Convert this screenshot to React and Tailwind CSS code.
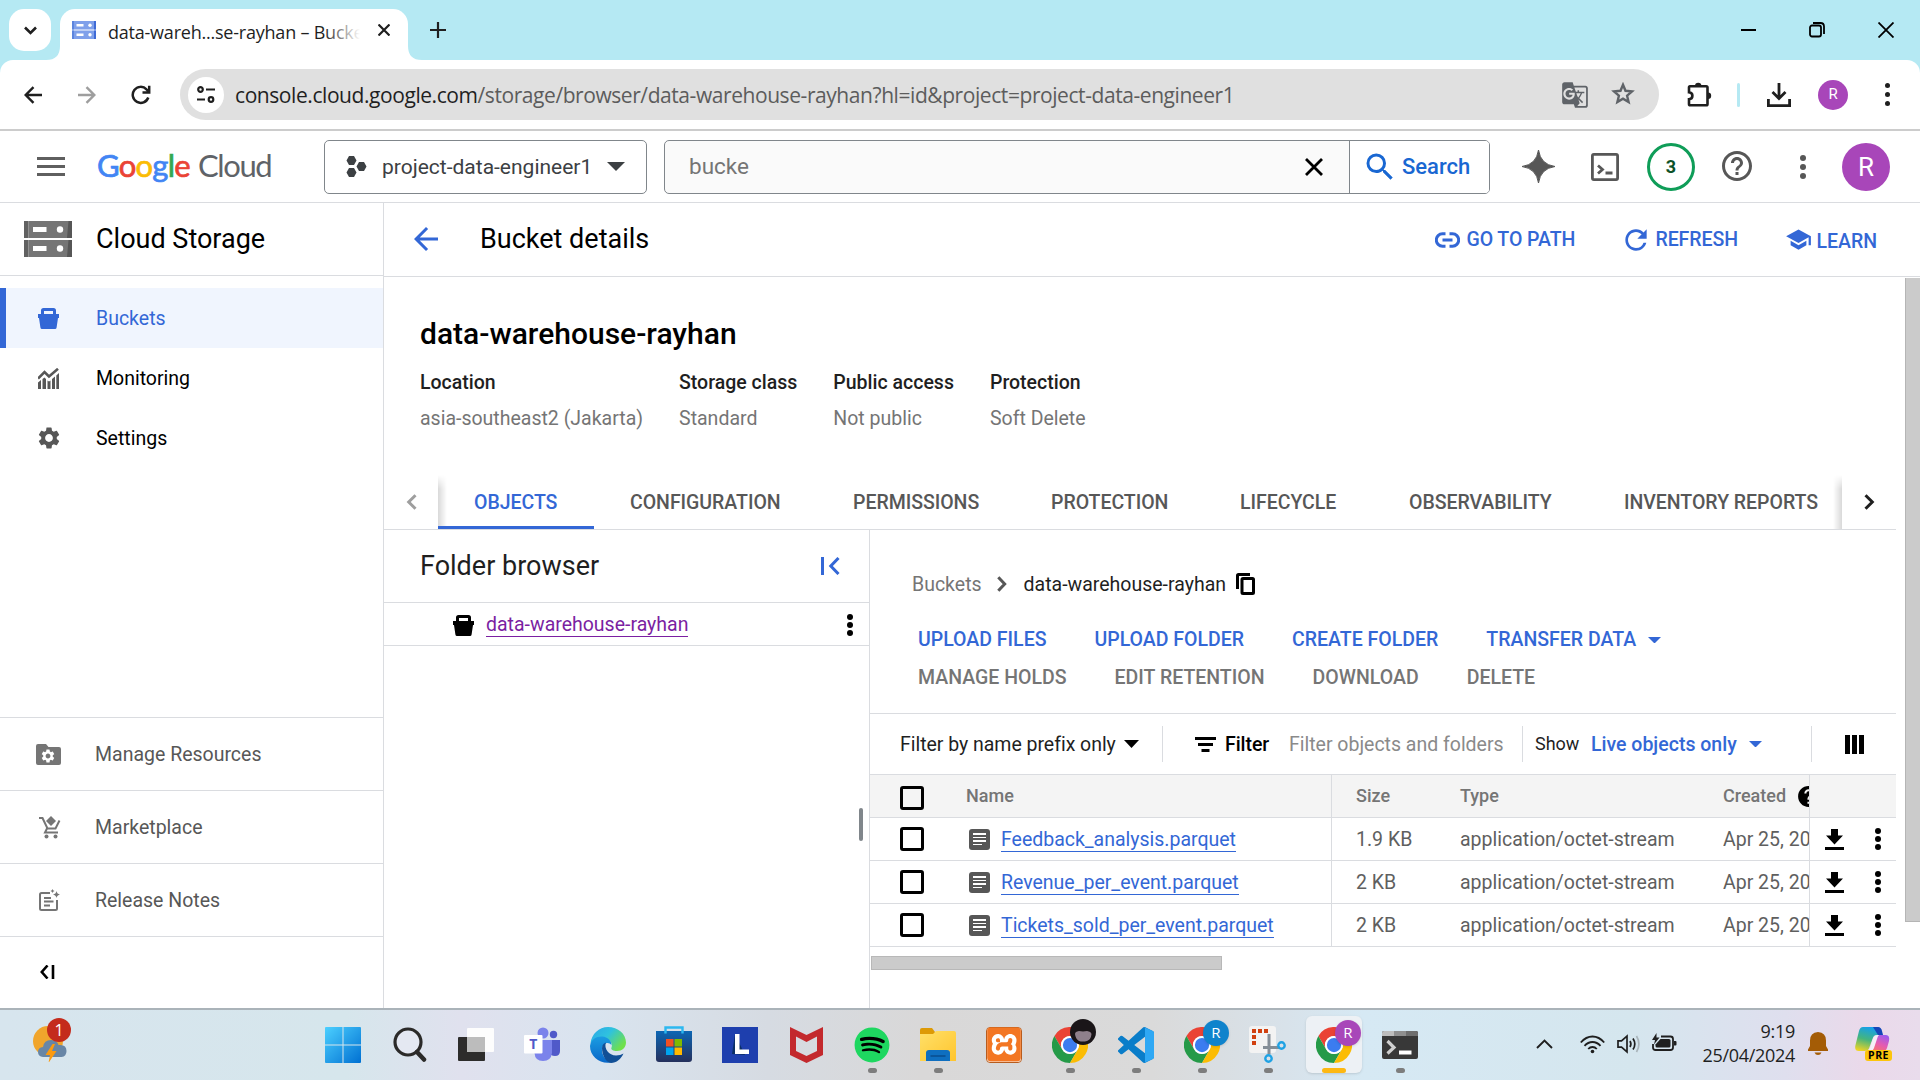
import React from "react";
import {
  MdArrowBack, MdRefresh, MdGTranslate, MdSearch, MdHelpOutline, MdSchool, MdSettings, MdHelp,
} from "react-icons/md";
import { FaSpotify } from "react-icons/fa";
import { SiXampp } from "react-icons/si";

const Dots = ({ className = "gap-[3px] text-black", dot = "h-[6px] w-[6px]" }) => (
  <span className={"flex shrink-0 flex-col items-center " + className}>
    <span className={"rounded-full bg-current " + dot} />
    <span className={"rounded-full bg-current " + dot} />
    <span className={"rounded-full bg-current " + dot} />
  </span>
);

const Caret = ({ w, h, className = "" }) => (
  <svg width={w} height={h} viewBox="0 0 10 5" preserveAspectRatio="none" className={"shrink-0 " + className}>
    <path d="M0 0h10L5 5z" fill="currentColor" />
  </svg>
);

const BucketIcon = ({ className }) => (
  <svg width="21" height="21" viewBox="0 0 21 21" fill="currentColor" className={"shrink-0 " + className}>
    <path fillRule="evenodd" d="M5.5 0h10Q18 0 18 2.5V6h3v4h-1l-1.4 9.4Q18.400 21 17 21H4Q2.600 21 2.400 19.400L1 10H0V6h3V2.500Q3 0 5.500 0zM6 3v3h9V3z" />
  </svg>
);

const StorageLogo = () => (
  <svg width="48" height="36" viewBox="0 0 48 36" className="shrink-0">
    {[0, 19].map((y) => (
      <g key={y} transform={`translate(0 ${y})`}>
        <rect width="48" height="17" fill="#757575" />
        <rect width="4" height="17" fill="#616161" />
        <path d="M4 0h.8v17H4z" fill="#9a9a9a" />
        <path d="M44.500 0H48v17h-5z" fill="#565656" />
        <rect x="9" y="6" width="13.500" height="5" fill="#fff" />
        <circle cx="36" cy="8.500" r="3.200" fill="#fff" />
      </g>
    ))}
  </svg>
);

const DownloadSmall = () => (
  <svg width="19" height="21" viewBox="0 0 19 21" className="shrink-0">
    <path d="M6 0h7v6.500h5L9.500 15.500 1 6.500h5zM0 18h19v3H0z" fill="#000" />
  </svg>
);

const Checkbox = () => <span className="h-6 w-6 shrink-0 rounded-[3px] border-[3px] border-black" />;

function TabStrip() {
  return (
    <div className="flex h-[60px] items-start bg-[#b5e9f3]">
      <div className="ml-[9px] mt-[9px] flex h-[42px] w-[42px] items-center justify-center rounded-[15px] bg-white">
        <svg width="13" height="9" viewBox="0 0 13 9" fill="none" stroke="#1f1f1f" strokeWidth="2.600"><path d="M1 1.500 6.500 7 12 1.500" /></svg>
      </div>
      <div className="relative ml-[9px] mt-[9px] flex h-[51px] w-[348px] items-center rounded-t-[15px] bg-white">
        <svg className="absolute bottom-0 -left-[14px]" width="14" height="14"><path d="M14 0v14H0Q14 14 14 0z" fill="#fff" /></svg>
        <svg className="absolute bottom-0 -right-[14px]" width="14" height="14"><path d="M0 0v14h14Q0 14 0 0z" fill="#fff" /></svg>
        <svg width="24" height="18" viewBox="0 0 24 18" className="mb-[9px] ml-3 shrink-0">
          {[0, 9.500].map((y) => (
            <g key={y} transform={`translate(0 ${y})`}>
              <rect width="24" height="8.500" fill="#7fa0ea" /><rect width="2" height="8.500" fill="#5c85de" /><rect x="22" width="2" height="8.500" fill="#3f6bd6" />
              <rect x="4.500" y="3" width="7" height="2.500" fill="#fff" /><circle cx="18" cy="4.200" r="1.700" fill="#fff" />
            </g>
          ))}
        </svg>
        <span className="relative mb-[6px] ml-3 w-[252px] overflow-hidden whitespace-nowrap font-['Open_Sans'] text-[18px] leading-6 tracking-[-0.22px] text-[#1f1f1f]">
          data-wareh...se-rayhan – Bucke
          <span className="absolute inset-y-0 right-0 w-9 bg-gradient-to-r from-transparent to-white" />
        </span>
        <svg width="12" height="12" viewBox="0 0 12 12" className="mb-[9px] ml-[18px] shrink-0" stroke="#1f1f1f" strokeWidth="2.200"><path d="M.5.5l11 11M11.500.5l-11 11" /></svg>
      </div>
      <svg width="16" height="16" viewBox="0 0 16 16" className="ml-[22px] mt-[22px]" stroke="#1f1f1f" strokeWidth="2.200"><path d="M8 0v16M0 8h16" /></svg>
      <div className="ml-auto mr-[26px] mt-[22px] flex items-center text-black">
        <svg width="15" height="15" stroke="currentColor" strokeWidth="2"><path d="M0 7h15" /></svg>
        <svg width="16" height="16" viewBox="0 0 16 16" className="ml-[53px]" fill="none" stroke="currentColor" strokeWidth="1.800">
          <rect x="1" y="3.500" width="11" height="11" rx="2" /><path d="M4 1h7.500Q15 1 15 4.500V12" />
        </svg>
        <svg width="16" height="16" viewBox="0 0 16 16" className="ml-[53px]" stroke="currentColor" strokeWidth="1.800"><path d="M.5.5l15 15M15.500.5l-15 15" /></svg>
      </div>
    </div>
  );
}

function Toolbar() {
  return (
    <div className="bg-[#b5e9f3]">
      <div className="flex h-[71px] items-center rounded-t-[13px] border-b-2 border-[#cccccc] bg-white text-[#1f1f1f]">
        <svg width="18" height="18" viewBox="0 0 18 18" className="ml-6 shrink-0" fill="none" stroke="currentColor" strokeWidth="2.400"><path d="M18 9H2M9.500 1.200 1.700 9l7.800 7.800" /></svg>
        <svg width="18" height="18" viewBox="0 0 18 18" className="ml-9 shrink-0" fill="none" stroke="#9e9e9e" strokeWidth="2.400"><path d="M0 9h16M8.500 1.200 16.300 9l-7.800 7.800" /></svg>
        <svg width="20" height="20" viewBox="0 0 20 20" className="ml-[35px] shrink-0" fill="none" stroke="currentColor" strokeWidth="2.500"><path d="M17.300 12.500A8 8 0 1 1 15.500 4.300L17.800 6.500M18.200.8v6.700h-6.700" /></svg>
        <div className="ml-[29px] flex h-[51px] w-[1479px] items-center rounded-full bg-[#e0e0e0]">
          <span className="ml-2 flex h-9 w-9 items-center justify-center rounded-full bg-white">
            <svg width="18" height="17" viewBox="0 0 18 17" fill="none" stroke="#1f1f1f" strokeWidth="2.200">
              <circle cx="3.500" cy="3.500" r="2.300" /><path d="M9 3.500h9M0 13.500h8" /><circle cx="14" cy="13.500" r="2.300" />
            </svg>
          </span>
          <span className="ml-[11px] whitespace-nowrap font-['Open_Sans'] text-[21px] leading-7 tracking-[-0.43px] text-[#5c5c5c]">
            <span className="text-[#1f1f1f]">console.cloud.google.com</span>/storage/browser/data-warehouse-rayhan?hl=id&amp;project=project-data-engineer1
          </span>
          <MdGTranslate size={28} className="ml-auto mr-[22px] shrink-0 text-[#5f6368]" />
          <svg width="24" height="23" viewBox="0 0 24 23" className="mb-[2px] mr-[24px] shrink-0" fill="none" stroke="#5f6368" strokeWidth="2.400">
            <path d="M12 2.800l2.500 6 6.500.6-4.900 4.300 1.500 6.400L12 16.700l-5.600 3.400 1.500-6.400L3 9.400l6.500-.6z" />
          </svg>
        </div>
        <svg width="25" height="25" viewBox="0 0 25 25" className="ml-[28px] shrink-0">
          <path d="M3 4.300h16.200q1.300 0 1.300 1.300V22q0 1.300-1.300 1.300H3.300Q2 23.300 2 22v-4.700q3.400-.3 3.400-3.500T2 10.300V5.600Q2 4.300 3 4.300z" fill="none" stroke="currentColor" strokeWidth="2.600" />
          <path d="M8 4a3.200 3.200 0 0 1 6.400 0zM21 10.500a3.200 3.200 0 0 1 0 6.400z" fill="currentColor" />
        </svg>
        <span className="ml-[25px] h-6 w-[3px] rounded bg-[#b5e9f3]" />
        <svg width="24" height="24" viewBox="0 0 24 24" className="ml-[27px] shrink-0" fill="none" stroke="currentColor" strokeWidth="2.800">
          <path d="M12 0v15M5.500 9 12 15.500 18.500 9M1.400 16v6.600h21.200V16" />
        </svg>
        <span className="ml-[27px] flex h-[30px] w-[30px] items-center justify-center rounded-full bg-[#a846b9] text-[15px] leading-none text-white">R</span>
        <Dots className="ml-[37px] gap-1" dot="h-[5px] w-[5px]" />
      </div>
    </div>
  );
}

function CloudHeader() {
  return (
    <div className="flex h-[72px] items-center border-b border-[#dadce0] bg-white text-[#575757]">
      <div className="ml-[37px] flex w-7 shrink-0 flex-col gap-[5px] pb-px">
        <span className="h-[3px] bg-[#5f5f5f]" /><span className="h-[3px] bg-[#5f5f5f]" /><span className="h-[3px] bg-[#5f5f5f]" />
      </div>
      <div className="mb-[3px] ml-[32px] flex w-[175px] shrink-0 items-center whitespace-nowrap font-['Lato'] text-[31px] leading-9">
        <span className="w-[101px] tracking-[-0.75px] [-webkit-text-stroke:0.7px]">
          <span className="text-[#4285f4]">G</span><span className="text-[#ea4335]">o</span><span className="text-[#fbbc04]">o</span><span className="text-[#4285f4]">g</span><span className="text-[#34a853]">l</span><span className="text-[#ea4335]">e</span>
        </span>
        <span className="tracking-[-1.4px] text-[#5f6368]">Cloud</span>
      </div>
      <div className="ml-[52px] flex h-[54px] w-[323px] shrink-0 items-center rounded-[5px] border border-[#80868b] text-[#3c4043]">
        <svg width="21" height="21" viewBox="0 0 21 21" className="ml-[21px] shrink-0" fill="#3c4043">
          <path d="M3 0h5l2.500 4.500L8 9H3L.5 4.500zM3 12h5l2.500 4.500L8 21H3L.5 16.500zM13 6h5l2.500 4.500L18 15h-5l-2.500-4.500z" />
        </svg>
        <span className="ml-[15px] w-[209px] whitespace-nowrap text-[21px] leading-7">project-data-engineer1</span>
        <Caret w={18} h={9} className="ml-4" />
      </div>
      <div className="ml-[17px] flex h-[54px] w-[826px] shrink-0 items-center overflow-hidden rounded-[5px] border border-[#80868b] bg-[#fafafa]">
        <span className="mb-[2px] ml-6 flex-1 text-[22.5px] leading-7 text-[#757575]">bucke</span>
        <svg width="18" height="18" viewBox="0 0 18 18" stroke="#000" strokeWidth="2.800"><path d="M1 1l16 16M17 1 1 17" /></svg>
        <div className="ml-[26px] flex h-full w-[140px] items-center border-l border-[#80868b] bg-white text-[#1967d2]">
          <MdSearch size={36} className="ml-3 shrink-0" />
          <span className="ml-1 text-[22px] font-medium leading-7">Search</span>
        </div>
      </div>
      <svg width="33" height="33" viewBox="0 0 33 33" className="ml-[32px] shrink-0"><path d="M16.500 0Q18.500 14.500 33 16.500 18.500 18.500 16.500 33 14.500 18.500 0 16.500 14.500 14.500 16.500 0z" fill="#575757" stroke="#575757" strokeWidth="1" /></svg>
      <svg width="28" height="28" viewBox="0 0 28 28" className="ml-[36px] shrink-0" fill="none" stroke="#575757" strokeWidth="2.800">
        <rect x="1.400" y="1.400" width="25.200" height="25.200" rx="1.500" /><path d="M7 12.500l4.500 4L7 20.500M14.500 20h7" />
      </svg>
      <span className="ml-[28px] flex h-12 w-12 shrink-0 items-center justify-center rounded-full border-[3px] border-[#0f9d58] text-[18px] font-bold leading-none text-[#0d5229]">3</span>
      <MdHelpOutline size={36} className="mb-px ml-6 shrink-0" />
      <Dots className="ml-[45px] gap-[3px]" dot="h-[6px] w-[6px]" />
      <span className="ml-[36px] flex h-12 w-12 shrink-0 items-center justify-center rounded-full bg-[#a846b9] text-[26px] leading-none text-white">R</span>
    </div>
  );
}

const MonitoringIcon = () => (
  <svg width="21" height="21" viewBox="0 0 21 21" className="shrink-0">
    <path d="M0 10.500 6.500 4l4.500 4.500L20 .8" fill="none" stroke="#575757" strokeWidth="2.600" />
    <path d="M0 14.500 3 12v9H0zM4.500 11l2-1.500 1.500 1.500v10H4.500zM9.500 12.500l1.500 1 1.500-1V21h-3zM14 11l3-2.500V21h-3zM18.300 7.500 21 5v16h-2.700z" fill="#575757" />
  </svg>
);

const FolderGear = () => (
  <span className="relative flex h-[21px] w-[25px] items-center justify-center">
    <svg width="25" height="21" viewBox="0 0 25 21"><path d="M2 0h8l2.500 3H23q2 0 2 2v14q0 2-2 2H2q-2 0-2-2V2q0-2 2-2z" fill="#757575" /></svg>
    <MdSettings size={16} className="absolute left-[4px] top-[4px] text-white" />
  </span>
);

const MarketIcon = () => (
  <svg width="22" height="23" viewBox="0 0 22 23" className="ml-0.5">
    <path d="M0 2h3.500l5 10.500h8L20.500 4.500M8 12.500 6 16.500h13" fill="none" stroke="#757575" strokeWidth="2" />
    <path d="M12 0l5 5-5 5-5-5z" fill="#757575" /><circle cx="7.500" cy="20.500" r="2" fill="#757575" /><circle cx="16.500" cy="20.500" r="2" fill="#757575" />
  </svg>
);

const NotesIcon = () => (
  <svg width="21" height="22" viewBox="0 0 21 22" className="ml-0.5">
    <path d="M11 4H2.500Q1 4 1 5.500v14Q1 21 2.500 21h14q1.500 0 1.500-1.500V11" fill="none" stroke="#757575" strokeWidth="2" />
    <path d="M5 9h7M5 12.500h9.500M5 16.500h6" stroke="#757575" strokeWidth="1.800" />
    <path d="M17.500 2q.5 3 3.500 3.500-3 .5-3.500 3.500-.5-3-3.500-3.500 3-.5 3.500-3.500zM13.500 0q.3 1.700 2 2-1.700.3-2 2-.3-1.700-2-2 1.700-.3 2-2z" fill="#757575" />
  </svg>
);

function Sidebar() {
  return (
    <div className="flex w-[384px] shrink-0 flex-col border-r border-[#dadce0]">
      <div className="flex h-[73px] items-center border-b border-[#dadce0]">
        <span className="ml-6"><StorageLogo /></span>
        <span className="ml-[24px] text-[27px] leading-9 text-black">Cloud Storage</span>
      </div>
      <div className="mt-3 flex flex-1 flex-col">
        {[
          ["Buckets", <BucketIcon key="b" className="text-[#3367d6]" />],
          ["Monitoring", <MonitoringIcon key="m" />],
          ["Settings", <MdSettings key="s" size={26} className="shrink-0 text-[#575757]" />],
        ].map(([label, icon], i) => (
          <div key={label} className={"flex h-[60px] items-center text-[19.5px] " + (i === 0 ? "bg-[#f0f5fe] text-[#3367d6]" : "text-black")}>
            <span className={"h-full w-[6px] " + (i === 0 ? "bg-[#3367d6]" : "")} />
            <span className="ml-[29px] flex w-[27px] justify-center">{icon}</span>
            <span className="ml-[34px] pt-0.5 leading-7">{label}</span>
          </div>
        ))}
      </div>
      {[
        ["Manage Resources", <FolderGear key="f" />],
        ["Marketplace", <MarketIcon key="m" />],
        ["Release Notes", <NotesIcon key="n" />],
      ].map(([label, icon]) => (
        <div key={label} className="flex h-[73px] items-center border-t border-[#dadce0]">
          <span className="ml-9 flex w-[25px] justify-center">{icon}</span>
          <span className="ml-[34px] pt-0.5 text-[19.5px] leading-7 text-[#575757]">{label}</span>
        </div>
      ))}
      <div className="flex h-[72px] items-center border-t border-[#dadce0] pb-px">
        <svg width="15" height="14" viewBox="0 0 15 14" className="ml-10" fill="none" stroke="#000" strokeWidth="2.600"><path d="M7.500.5 1.800 7l5.700 6.500M13 0v14" /></svg>
      </div>
    </div>
  );
}

function PageHeader() {
  return (
    <div className="flex h-[74px] shrink-0 items-center whitespace-nowrap border-b border-[#dadce0] text-[19.5px] font-medium leading-7 text-[#3367d6]">
      <MdArrowBack size={36} className="mb-[2px] ml-6 shrink-0" />
      <span className="mb-[2px] ml-[36px] flex-1 text-[27px] font-normal leading-9 text-black">Bucket details</span>
      <svg width="25" height="16" viewBox="0 0 25 16" className="shrink-0" fill="none" stroke="currentColor" strokeWidth="3"><path d="M10.500 1.800H7.500a6.200 6.200 0 0 0 0 12.400h3M14.500 1.800h3a6.200 6.200 0 0 1 0 12.400h-3M7.500 8h10" /></svg>
      <span className="ml-[6px] w-[109px] tracking-[-0.06px]">GO TO PATH</span>
      <MdRefresh size={32} className="ml-[45px] shrink-0" />
      <span className="ml-[3px] w-[83px] tracking-[-0.05px]">REFRESH</span>
      <MdSchool size={27} className="ml-[47px] shrink-0" />
      <span className="ml-1 mr-[43px] mt-1">LEARN</span>
    </div>
  );
}

const INFO = [
  ["Location", "asia-southeast2 (Jakarta)"],
  ["Storage class", "Standard"],
  ["Public access", "Not public"],
  ["Protection", "Soft Delete"],
];

function TabBar() {
  return (
    <div className="mt-[44px] flex h-[55px] border-b border-[#dadce0]">
      <div className="flex w-[54px] shrink-0 items-center justify-center pb-px">
        <svg width="11" height="16" viewBox="0 0 11 16" fill="none" stroke="#9e9e9e" strokeWidth="3"><path d="M9.500 1.200 2.700 8l6.800 6.800" /></svg>
      </div>
      <div className="relative flex w-[1404px] overflow-hidden whitespace-nowrap text-[19.5px] font-medium leading-[56px] tracking-[-0.03px] text-[#575757]">
        <span className="w-[156px] shrink-0 border-b-[3px] border-[#3367d6] pl-9 text-[#3367d6]">OBJECTS</span>
        <span className="w-[223px] shrink-0 pl-9">CONFIGURATION</span>
        <span className="w-[198px] shrink-0 pl-9">PERMISSIONS</span>
        <span className="w-[189px] shrink-0 pl-9">PROTECTION</span>
        <span className="w-[169px] shrink-0 pl-9">LIFECYCLE</span>
        <span className="w-[215px] shrink-0 pl-9">OBSERVABILITY</span>
        <span className="shrink-0 pl-9">INVENTORY REPORTS</span>
        <span className="absolute left-0 top-0 h-[51px] w-[9px] bg-gradient-to-r from-black/15 to-transparent [mask-image:linear-gradient(transparent,black_14px)]" />
        <span className="absolute right-0 top-0 h-full w-[9px] bg-gradient-to-l from-black/15 to-transparent [mask-image:linear-gradient(transparent,black_14px)]" />
      </div>
      <div className="flex flex-1 items-center justify-center pb-px">
        <svg width="11" height="16" viewBox="0 0 11 16" fill="none" stroke="#1f1f1f" strokeWidth="3"><path d="M1.500 1.200 8.300 8l-6.800 6.800" /></svg>
      </div>
    </div>
  );
}

function FolderBrowser() {
  return (
    <div className="relative w-[486px] shrink-0 border-r border-[#dadce0]">
      <div className="flex h-[73px] items-center border-b border-[#dadce0] pl-9 pr-[29px]">
        <span className="flex-1 text-[27px] leading-9 text-[#1f1f1f]">Folder browser</span>
        <svg width="19" height="18" viewBox="0 0 19 18" fill="none" stroke="#3367d6" strokeWidth="3"><path d="M1.500 0v18M17.500 1 9.800 9l7.700 8" /></svg>
      </div>
      <div className="flex h-[43px] items-center border-b border-[#dadce0] pl-[69px] pr-4 pt-[2px]">
        <BucketIcon className="text-black" />
        <span className="mb-[2px] ml-3 h-[26px] whitespace-nowrap border-b border-[#7b1fa2] text-[19.5px] leading-[27px] text-[#7b1fa2]">data-warehouse-rayhan</span>
        <Dots className="ml-auto gap-[2px] text-black" />
      </div>
      <span className="absolute right-[6px] top-[278px] h-[33px] w-1 rounded-sm bg-[#80868b]" />
    </div>
  );
}

const FILES = [
  ["Feedback_analysis.parquet", "1.9 KB"],
  ["Revenue_per_event.parquet", "2 KB"],
  ["Tickets_sold_per_event.parquet", "2 KB"],
];

const COLS = "grid h-[43px] grid-cols-[96px_366px_128px_263px_86px_87px] border-b border-[#dadce0] whitespace-nowrap ";

function ObjectTable() {
  return (
    <div className="w-[1026px] leading-7">
      <div className={COLS + "bg-[#f4f4f4] text-[18px] font-medium text-[#757575]"}>
        <span className="flex items-center pl-[30px] pt-[3px]"><Checkbox /></span>
        <span className="flex items-center border-r border-[#dadce0]">Name</span>
        <span className="flex items-center pl-6">Size</span>
        <span className="flex items-center">Type</span>
        <span className="flex items-center overflow-hidden">Created<MdHelp size={25} className="ml-[10px] shrink-0 text-black" /></span>
        <span className="border-l border-[#dadce0]" />
      </div>
      {FILES.map(([name, size]) => (
        <div key={name} className={COLS + "text-[19.5px] text-[#5f5f5f]"}>
          <span className="flex items-center pl-[30px]"><Checkbox /></span>
          <span className="flex items-center border-r border-[#dadce0] pl-[3px]">
            <span className="flex h-[21px] w-[21px] flex-col justify-center gap-[2px] rounded-[3px] bg-[#575757] pl-1">
              <span className="h-[1.500px] w-[13px] bg-white" /><span className="h-[1.500px] w-[13px] bg-white" /><span className="h-[1.500px] w-[13px] bg-white" /><span className="h-[1.500px] w-[9px] bg-white" />
            </span>
            <span className="ml-[11px] h-[26px] border-b border-[#3367d6] leading-[27px] tracking-[-0.01px] text-[#3367d6]">{name}</span>
          </span>
          <span className="flex items-center pl-6 pt-0.5">{size}</span>
          <span className="flex items-center pt-0.5">application/octet-stream</span>
          <span className="flex items-center overflow-hidden pt-0.5">Apr 25, 20</span>
          <span className="flex items-center border-l border-[#dadce0] pl-[15px]">
            <DownloadSmall /><Dots className="ml-[31px] gap-[2px] text-black" />
          </span>
        </div>
      ))}
    </div>
  );
}

function ObjectsPanel() {
  return (
    <div className="flex-1 pt-[42px] leading-7">
      <div className="flex h-6 items-center whitespace-nowrap pl-[42px] text-[19.5px] text-[#757575]">
        <span className="pt-0.5">Buckets</span>
        <svg width="10" height="16" viewBox="0 0 10 16" className="ml-[15px]" fill="none" stroke="#575757" strokeWidth="3"><path d="M1.300 1.200 7.700 8l-6.400 6.800" /></svg>
        <span className="ml-[17px] pt-0.5 text-[#1f1f1f]">data-warehouse-rayhan</span>
        <svg width="19" height="22" viewBox="0 0 19 22" className="ml-[10px]" fill="none" stroke="#000" strokeWidth="3"><path d="M1.500 16V2.500q0-1 1-1H14" /><rect x="6" y="5.500" width="11.500" height="15" rx="1" /></svg>
      </div>
      <div className="mt-[25px] flex h-[38px] items-center gap-12 whitespace-nowrap pl-12 text-[19.5px] font-medium text-[#3367d6]">
        <span>UPLOAD FILES</span><span>UPLOAD FOLDER</span><span>CREATE FOLDER</span>
        <span className="flex items-center">TRANSFER DATA<Caret w={13} h={6.500} className="ml-3" /></span>
      </div>
      <div className="flex h-[38px] items-center gap-12 whitespace-nowrap pl-12 text-[19.5px] font-medium tracking-[0.01px] text-[#757575]">
        <span>MANAGE HOLDS</span><span>EDIT RETENTION</span><span>DOWNLOAD</span><span>DELETE</span>
      </div>
      <div className="mt-4 flex h-[62px] w-[1026px] items-center whitespace-nowrap border-y border-[#dadce0] pl-[30px] text-[19.5px] text-black">
        <span className="w-[216px] pt-0.5 tracking-[-0.03px] text-[#1f1f1f]">Filter by name prefix only</span>
        <Caret w={15} h={8} className="ml-2" />
        <span className="ml-[23px] h-9 w-px bg-[#dadce0]" />
        <svg width="21" height="15" viewBox="0 0 21 15" className="ml-[32px]" fill="#000"><path d="M0 0h21v3H0zM3 6h15v3H3zM6.500 12h8v3h-8z" /></svg>
        <span className="ml-[9px] w-[64px] pt-0.5 font-medium tracking-[-0.05px]">Filter</span>
        <span className="w-[233px] pt-0.5 tracking-[-0.01px] text-[#8a8a8a]">Filter objects and folders</span>
        <span className="h-9 w-px bg-[#dadce0]" />
        <span className="ml-3 w-[56px] text-[18px] text-[#1f1f1f]">Show</span>
        <span className="w-[146px] pt-0.5 font-medium text-[#3367d6]">Live objects only</span>
        <Caret w={13} h={6.500} className="ml-3 text-[#3367d6]" />
        <span className="ml-[49px] h-9 w-px bg-[#dadce0]" />
        <span className="ml-[33px] flex h-[19px] gap-[2px]"><span className="w-[5px] bg-black" /><span className="w-[5px] bg-black" /><span className="w-[5px] bg-black" /></span>
      </div>
      <ObjectTable />
      <div className="ml-px mt-[9px] h-[14px] w-[351px] border border-[#b8b8b8] bg-[#cbcbcb]" />
    </div>
  );
}

const Chrome = () => (
  <svg width="36" height="36" viewBox="0 0 48 48">
    <path d="M24 12H44.800A24 24 0 0 0 3.200 12L13.600 30A12 12 0 0 1 24 12z" fill="#ea4335" />
    <path d="M13.600 30 3.200 12A24 24 0 0 0 24 48L34.400 30A12 12 0 0 1 13.600 30z" fill="#259a48" />
    <path d="M34.400 30 24 48A24 24 0 0 0 44.800 12H24A12 12 0 0 1 34.400 30z" fill="#fbbc04" />
    <circle cx="24" cy="24" r="12" fill="#fff" /><circle cx="24" cy="24" r="9.500" fill="#3b7cf0" />
  </svg>
);

const PhotoBadge = () => (
  <svg width="26" height="26" viewBox="0 0 26 26" className="absolute -right-[8px] -top-[8px]">
    <circle cx="13" cy="13" r="13" fill="#1a1518" />
    <path d="M5 15q0-2.500 4-3l4 .5 4-.5q4 .5 4.500 3-.5 5.500-4.500 7-4.500 1.200-8 0-3.500-2-4-7z" fill="#8f808c" />
  </svg>
);

const LetterBadge = ({ className }) => (
  <span className={"absolute -right-[9px] -top-[7px] flex h-[26px] w-[26px] items-center justify-center rounded-full text-[15px] leading-none text-white shadow " + className}>R</span>
);

const APPS = [
  { n: "start", el: (
    <svg width="36" height="36" viewBox="0 0 36 36" className="-translate-x-px">
      <defs><linearGradient id="win" x1="0" y1="0" x2="36" y2="36" gradientUnits="userSpaceOnUse"><stop stopColor="#4cd0ff" /><stop offset="1" stopColor="#0070d2" /></linearGradient></defs>
      <path d="M1 0h16.500v17.500H0V1q0-1 1-1zM18.500 0H35q1 0 1 1v16.500H18.500zM0 18.500h17.500V36H1q-1 0-1-1zM18.500 18.500H36V35q0 1-1 1H18.500z" fill="url(#win)" />
    </svg>) },
  { n: "search", el: <svg width="34" height="36" viewBox="0 0 34 36" fill="none" stroke="#2b2a29"><circle cx="15" cy="15" r="13" strokeWidth="3.200" fill="#e4e8f2" /><path d="M24 25l7 7.500" strokeWidth="4.500" strokeLinecap="round" /></svg> },
  { n: "tasks", el: <svg width="36" height="36" viewBox="0 0 36 36"><rect y="10" width="27" height="24" rx="1" fill="#2d2c2b" /><rect x="9" y="1" width="27" height="24" rx="1" fill="#fdfdfd" /><rect x="9" y="10" width="18" height="15" fill="#bcbcbc" /></svg> },
  { n: "teams", el: (
    <svg width="36" height="36" viewBox="0 0 36 36"><circle cx="19" cy="6" r="5.500" fill="#7b83eb" /><circle cx="29.500" cy="7.500" r="3.700" fill="#5059c9" /><path d="M26 13h10v11q0 5-5 5t-5-4z" fill="#5059c9" /><path d="M11 13h17v13q-1 8-9 8t-8.500-8z" fill="#7b83eb" /><rect y="8" width="18.500" height="18.500" rx="1" fill="#fff" /><text x="9.200" y="22" textAnchor="middle" fontFamily="Open Sans" fontWeight="700" fontSize="14" fill="#5059c9">T</text></svg>) },
  { n: "edge", el: (
    <svg width="36" height="36" viewBox="0 0 36 36">
      <defs><linearGradient id="eg" x1="0" y1="0" x2="1" y2="0.600"><stop stopColor="#2aa6e8" /><stop offset=".5" stopColor="#2fc2df" /><stop offset="1" stopColor="#6fe04b" /></linearGradient><linearGradient id="eb" x1="0" y1="0" x2="0" y2="1"><stop stopColor="#1b9de2" /><stop offset="1" stopColor="#0a67c8" /></linearGradient></defs>
      <path d="M.5 16.500C1.500 7 9 0 18 0c10 0 18 7 18 15.500 0 5-4 8.500-9 8.500-4 0-6.500-1.500-5.500-3.500 1.500-3.500-1-7.500-6-9C10 10 4 12 .5 16.500z" fill="url(#eg)" />
      <path d="M0 19C1 12 7 9 12.500 9.500c5 .5 9 4 9 8.500-3-4-9-2-9.500 4-.5 5 3 12 10 13.300C11 38 0 30 0 19z" fill="url(#eb)" />
      <path d="M12 21c0-3 2-5 4-5.500-2.500 6 3 13 10 13 3 0 5.500-1 7.500-2C31 32 26.500 36 21 36c-5.500-1-9-8-9-15z" fill="#114f96" />
    </svg>) },
  { n: "store", el: (
    <svg width="36" height="37" viewBox="0 0 36 37"><defs><linearGradient id="st" x1="0" y1="0" x2="0" y2="1"><stop stopColor="#0c66b4" /><stop offset="1" stopColor="#25305c" /></linearGradient></defs><path d="M9.500 9V1.500h17V9" fill="none" stroke="#2cb8f0" strokeWidth="2.400" /><path d="M0 5h36v28q0 3-3 3H3q-3 0-3-3z" fill="url(#st)" /><path d="M9.500 5v2.500M26.500 5v2.500" stroke="#2cb8f0" strokeWidth="2.400" /><path d="M10 13h7.500v7.500H10z" fill="#f25022" /><path d="M18.500 13H26v7.500h-7.500z" fill="#7fba00" /><path d="M10 21.500h7.500V29H10z" fill="#00a4ef" /><path d="M18.500 21.500H26V29h-7.500z" fill="#ffb900" /></svg>) },
  { n: "l", el: <svg width="36" height="36" viewBox="0 0 36 36"><path d="M0 0h36v36H0z" fill="#1e3fae" /><path d="M13 7 10 27l13 1z" fill="#0a2f66" /><path d="M13 7h4.500v15.500H27V27H13z" fill="#fff" /></svg> },
  { n: "mcafee", el: <svg width="33" height="36" viewBox="0 0 33 36"><path fillRule="evenodd" d="M0 0l16.500 8L33 0v28l-16.500 8L0 28zM6 9.500V24l10.500 5L27 24V9.500L16.500 15z" fill="#c3292d" /></svg> },
  { n: "spotify", run: true, el: <span className="flex h-9 w-9 items-center justify-center rounded-full bg-[radial-gradient(black_60%,transparent_62%)]"><FaSpotify size={36} color="#1ed760" /></span> },
  { n: "files", run: true, el: (
    <svg width="36" height="34" viewBox="0 0 36 34"><path d="M0 2q0-2 2-2h10l3 4v4H0z" fill="#dd9a06" /><defs><linearGradient id="fo" x1="0" y1="0" x2="1" y2="1"><stop stopColor="#ffe069" /><stop offset="1" stopColor="#ffc52e" /></linearGradient></defs><path d="M0 6h13l3-3h18q2 0 2 2v28H0z" fill="url(#fo)" /><path d="M6 33V25q0-3 3-3h18q3 0 3 3v8z" fill="#0f6fc0" /><path d="M10.500 28h15" stroke="#0a4c8e" strokeWidth="1.500" /></svg>) },
  { n: "xampp", el: <span className="flex h-9 w-9 items-center justify-center rounded-[4px] border border-[#b85c1d] bg-white"><SiXampp size={35} color="#f37623" /></span> },
  { n: "chrome1", run: true, el: <span className="relative"><Chrome /><PhotoBadge /></span> },
  { n: "code", run: true, el: (
    <svg width="36" height="36" viewBox="0 0 100 100"><path fillRule="evenodd" d="M96.460 10.800 75.860.87a6.230 6.230 0 0 0-7.100 1.200L29.350 38.040 12.190 25a4.160 4.160 0 0 0-5.320.24l-5.500 5.010a4.170 4.170 0 0 0 0 6.160L16.250 50 1.360 63.580a4.170 4.170 0 0 0 0 6.160l5.500 5.010a4.160 4.160 0 0 0 5.320.24l17.160-13.030 39.420 35.960a6.220 6.220 0 0 0 7.100 1.200l20.600-9.910A6.250 6.250 0 0 0 100 83.580V16.410a6.250 6.250 0 0 0-3.540-5.610zM75.020 72.700 45.110 50l29.910-22.700z" fill="#0a7dc9" /><path d="M73 99.500 96.500 89q3.500-1.800 3.500-5.400V16.400q0-3.800-3.500-5.600L73 .5q2 1.500 2 5v89q0 3.500-2 5z" fill="#2fa8f4" /></svg>) },
  { n: "chrome2", run: true, el: <span className="relative"><Chrome /><LetterBadge className="bg-[#0f83cc]" /></span> },
  { n: "snip", run: true, el: (
    <svg width="37" height="37" viewBox="0 0 37 37" className="-translate-x-px"><rect width="27" height="27" rx="3" fill="#f3f3f3" /><path d="M5 19V5h15" fill="none" stroke="#d1400f" strokeWidth="4" strokeDasharray="4 2" /><path d="M20 8v20M14 21.500h16" stroke="#858e97" strokeWidth="3" fill="none" /><circle cx="32.500" cy="19.500" r="3.200" fill="none" stroke="#1fa2e4" strokeWidth="2.400" /><circle cx="19.500" cy="32.500" r="3.200" fill="none" stroke="#1fa2e4" strokeWidth="2.400" /></svg>) },
  { n: "chrome3", active: true, el: <span className="relative"><Chrome /><LetterBadge className="bg-[#a846b9]" /></span> },
  { n: "term", run: true, el: <svg width="36" height="28" viewBox="0 0 36 28"><rect width="36" height="28" rx="2" fill="#383838" /><path d="M2 0h10v5H0V2q0-2 2-2z" fill="#bdbdbd" /><path d="M12 0h12v5H12z" fill="#8f8f8f" /><path d="M24 0h10q2 0 2 2v3H24z" fill="#6e6e6e" /><path d="M5.500 10l6.500 6.500-6.500 6" fill="none" stroke="#d0d0d0" strokeWidth="3.200" /><path d="M17 21.500h12.500" stroke="#fff" strokeWidth="4" /></svg> },
];

function Taskbar() {
  return (
    <div className="flex h-[72px] items-start border-t-2 border-[#aab3b9] bg-[linear-gradient(90deg,#d7e5ee_0%,#d6e6ec_18%,#e0e1ee_24%,#d9e4ef_31%,#d6dbe2_40%,#d9d8d8_48%,#dadada_60%,#d8e2ea_67%,#d6e9f4_71%,#d5e6ee_85%,#dfdfee_93%,#ead9ea_97%,#e9dcec_100%)] font-['Open_Sans'] text-[#1f1f1f]">
      <div className="relative ml-8 mt-[8px] h-[44px] w-[39px] shrink-0">
        <svg width="39" height="44" viewBox="0 0 39 44">
          <circle cx="16" cy="23" r="15" fill="#f0a52c" />
          <path d="M11 39q-5-.5-5-5t5-5q1-7 8-7 6 0 7.500 5 8-1 8 6 0 5.500-5 6z" fill="#6886a6" />
          <path d="M20.500 26l-7 11h4.500l-1.500 8 8-12h-4.500l3-7z" fill="#fb9a10" />
        </svg>
        <span className="absolute right-0 top-0 flex h-6 w-6 items-center justify-center rounded-full bg-[#c42b1c] text-[16px] leading-none text-white">1</span>
      </div>
      <div className="ml-[240px] flex">
        {APPS.map((a) => (
          <div key={a.n} className="relative mt-[6px] flex h-[57px] w-[66px] justify-center">
            <div className={"flex h-[57px] w-[56px] items-center justify-center rounded-[6px] " + (a.active ? "bg-[#edf1f5] shadow" : "")}>{a.el}</div>
            {a.run && <span className="absolute bottom-0 h-[5px] w-[9px] rounded-full bg-[#7d7d7d]" />}
            {a.active && <span className="absolute bottom-0 h-[5px] w-6 rounded-full bg-[#fdb813]" />}
          </div>
        ))}
      </div>
      <div className="ml-auto flex h-[68px] items-center">
        <svg width="17" height="10" viewBox="0 0 17 10" fill="none" stroke="currentColor" strokeWidth="1.900"><path d="M1 9l7.500-7.500L16 9" /></svg>
        <svg width="25" height="19" viewBox="0 0 25 19" className="ml-[27px]" fill="none" stroke="currentColor" strokeWidth="1.800"><path d="M.8 7.500Q6 1.500 12.500 1.500T24.200 7.500M4.500 10.800Q8 7 12.500 7t8 3.800M8.200 14Q10 12 12.500 12t4.300 2" /><circle cx="12.500" cy="16.500" r="1.800" fill="currentColor" stroke="none" /></svg>
        <svg width="24" height="20" viewBox="0 0 24 20" className="ml-[12px]" fill="none" stroke="currentColor" strokeWidth="1.700"><path d="M1 6.800h3.500L10 2v16l-5.500-4.800H1zM13 7q1.800 3 0 6M16 4.500q3.600 5.500 0 11" /><path d="M19.500 2q4.800 8 0 16" stroke="#a9b4ba" /></svg>
        <svg width="25" height="19" viewBox="0 0 25 19" className="mb-[3px] ml-[11px]"><path d="M9 3.500h9.500q2.500 0 2.500 2.500v8.500q0 2.500-2.500 2.500H3.500Q1 17 1 14.500V11" fill="none" stroke="#1f1f1f" strokeWidth="1.800" /><path d="M8.500 6H17q1.500 0 1.500 1.500V13q0 1.500-1.500 1.500H5Q3.500 14.500 3.500 13v-1.500z" fill="#1f1f1f" /><path d="M22 8h1.500q1 0 1 1v2.500q0 1-1 1H22zM4.500 0 0 7h3l-1 4.500L7.500 4.500h-3z" fill="#1f1f1f" /></svg>
        <span className="mb-[2px] ml-[23px] w-[95px] text-right text-[18px] leading-6 tracking-[-0.3px]">9:19<br />25/04/2024</span>
        <svg width="20" height="24" viewBox="0 0 20 24" className="ml-[13px]" fill="#a45c06"><path d="M10 0q8 .5 8 8.500V14l2 3.500V19H0v-1.500L2 14V8.500Q2 .5 10 0zM6.500 20.500h7q-1 2.500-3.500 2.500t-3.500-2.500z" /></svg>
        <div className="relative ml-[27px] mr-[29px] h-[34px] w-[36px]">
          <svg width="35" height="30" viewBox="0 0 35 30">
            <defs><linearGradient id="c1" x1="0.500" y1="0" x2="0.200" y2="1"><stop stopColor="#15a0ea" /><stop offset=".5" stopColor="#45b57e" /><stop offset="1" stopColor="#f2d422" /></linearGradient><linearGradient id="c2" x1="0.800" y1="0" x2="0.300" y2="1"><stop stopColor="#9a5cf0" /><stop offset=".5" stopColor="#e55bb0" /><stop offset="1" stopColor="#fb7a5a" /></linearGradient></defs>
            <path d="M8 0h14q3.500 0 4.500 4l1 4h-6q-3 0-4 4l-3 8q-1 4-5 4H4q-5 0-3.500-6L4 4q1-4 4-4z" fill="url(#c1)" /><path d="M18 0h5q3 0 4 4l1 4h-5z" fill="#1546b8" />
            <path d="M22 8h9q4 0 3 6l-2 7q-2 5-6 5H13q4 0 5-4l3-10q.3-3 1-4z" fill="url(#c2)" /><path d="M22 8q-3.500 1-4.500 5l-2.500 8q-.7 2-2 3h3q2 0 3-3l3-9q.5-2.500 2-4z" fill="#f6eef8" />
          </svg>
          <span className="absolute -right-px bottom-0 flex h-[11px] w-[27px] items-center justify-center rounded-[3px] bg-[#fcc50c] text-[10.5px] font-bold leading-none tracking-[0.5px] text-black">PRE</span>
        </div>
      </div>
    </div>
  );
}

export default function App() {
  return (
    <div className="flex h-[1080px] w-[1920px] flex-col overflow-hidden bg-white font-['Roboto',sans-serif]">
      <TabStrip />
      <Toolbar />
      <CloudHeader />
      <div className="flex h-[805px] shrink-0">
        <Sidebar />
        <div className="flex flex-1 flex-col">
          <PageHeader />
          <div className="flex flex-1">
            <div className="flex w-[1512px] flex-col">
              <div className="pl-9 pt-[39px]">
                <div className="text-[30px] font-medium leading-9 text-black">data-warehouse-rayhan</div>
                <div className="mt-[19px] flex gap-9 whitespace-nowrap text-[19.5px] leading-6">
                  {INFO.map(([k, v]) => (
                    <div key={k}>
                      <div className="font-medium text-[#1f1f1f]">{k}</div>
                      <div className="mt-3 text-[#757575]">{v}</div>
                    </div>
                  ))}
                </div>
              </div>
              <TabBar />
              <div className="flex flex-1">
                <FolderBrowser />
                <ObjectsPanel />
              </div>
            </div>
            <div className="ml-auto mt-px h-[644px] w-[15px] border-b border-l border-[#b5b5b5] bg-[#cbcbcb]" />
          </div>
        </div>
      </div>
      <Taskbar />
    </div>
  );
}
